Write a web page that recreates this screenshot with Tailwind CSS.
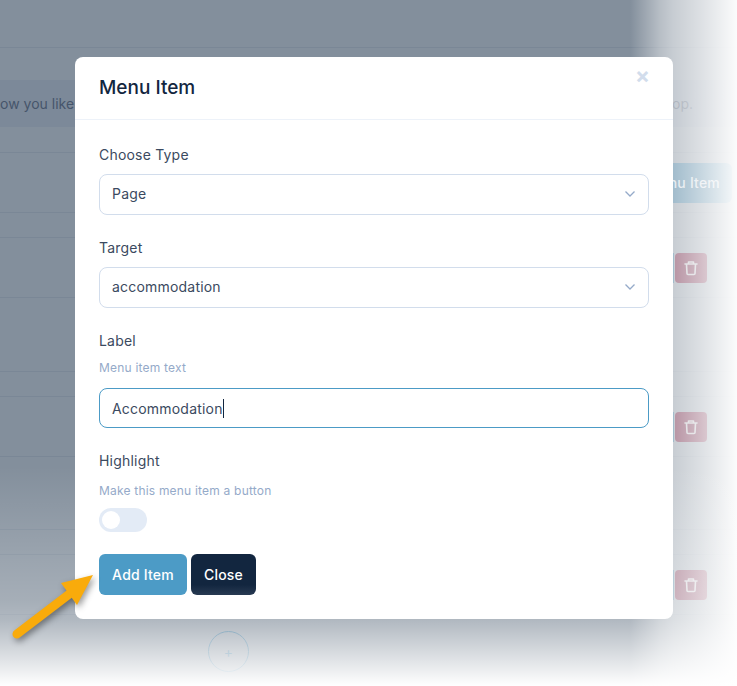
<!DOCTYPE html>
<html lang="en">
<head>
<meta charset="utf-8">
<title>Menu Item</title>
<script src="https://cdn.jsdelivr.net/npm/@tailwindcss/browser@4"></script>
</head>
<body class="m-0 bg-white">
<div class="relative w-[737px] h-[686px] overflow-hidden bg-[#838f9c] font-['Inter','Lato',sans-serif] text-[#12263f]">
  <!-- page behind -->
  <div class="flex flex-col w-full">
    <div class="h-[48px] border-b border-[#7a8796]"></div>
    <div class="h-[32px]"></div>
    <div class="h-[47px] bg-[#7c8999] flex items-center justify-between pr-[44px] text-[14px] text-[#46556b]"><span>ow you like</span><span>op.</span></div>
    <div class="h-[26px] border-b border-[#7a8796]"></div>
    <div class="h-[60px] border-b border-[#7a8796] flex justify-end items-center pr-[5px]"><div class="w-[70px] h-[40px] bg-[#2f6a8e] rounded-[6px] text-[#c8d2dc] text-[14px] font-medium tracking-[0.2px] whitespace-nowrap flex items-center justify-end pr-[12px]">nu Item</div></div>
    <div class="h-[25px] border-b border-[#7a8796]"></div>
    <div class="h-[60px] border-b border-[#7a8796] flex justify-end items-center gap-px pr-[30px]"><div class="w-[10px] h-[30px] bg-[#2f6a8e]"></div><div class="w-[32px] h-[30px] bg-[#5e0f32] rounded-[4px] flex items-center justify-center"><svg width="16" height="16" viewBox="0 0 16 16" fill="none" stroke="#b4b4bc" stroke-width="1.600" stroke-linecap="round" stroke-linejoin="round"><path d="M2 4h12M5.500 4V2h5v2M3.500 4l.5 9.500a1 1 0 0 0 1 1h6a1 1 0 0 0 1-1l.5-9.500"/></svg></div></div>
    <div class="h-[74px] border-b border-[#7a8796]"></div>
    <div class="h-[25px] border-b border-[#7a8796]"></div>
    <div class="h-[60px] border-b border-[#7a8796] flex justify-end items-center gap-px pr-[30px]"><div class="w-[10px] h-[30px] bg-[#2f6a8e]"></div><div class="w-[32px] h-[30px] bg-[#5e0f32] rounded-[4px] flex items-center justify-center"><svg width="16" height="16" viewBox="0 0 16 16" fill="none" stroke="#b4b4bc" stroke-width="1.600" stroke-linecap="round" stroke-linejoin="round"><path d="M2 4h12M5.500 4V2h5v2M3.500 4l.5 9.500a1 1 0 0 0 1 1h6a1 1 0 0 0 1-1l.5-9.500"/></svg></div></div>
    <div class="h-[73px] border-b border-[#7a8796]"></div>
    <div class="h-[25px] border-b border-[#7a8796]"></div>
    <div class="h-[60px] border-b border-[#7a8796] flex justify-end items-center gap-px pr-[30px]"><div class="w-[10px] h-[30px] bg-[#2f6a8e]"></div><div class="w-[32px] h-[30px] bg-[#5e0f32] rounded-[4px] flex items-center justify-center"><svg width="16" height="16" viewBox="0 0 16 16" fill="none" stroke="#b4b4bc" stroke-width="1.600" stroke-linecap="round" stroke-linejoin="round"><path d="M2 4h12M5.500 4V2h5v2M3.500 4l.5 9.500a1 1 0 0 0 1 1h6a1 1 0 0 0 1-1l.5-9.500"/></svg></div></div>
    <div class="pt-[16px] pl-[208px]"><div class="w-[41px] h-[41px] rounded-full border border-[#2f6a8e] flex items-center justify-center text-[#2f6a8e] text-[14px]">+</div></div>
  </div>
  <!-- fades of the cropped screenshot -->
  <div class="absolute inset-0 bg-[linear-gradient(to_right,rgba(255,255,255,0)_85.5%,rgba(255,255,255,0.42)_89.5%,rgba(255,255,255,0.55)_91.3%,rgba(255,255,255,0.72)_95%,rgba(255,255,255,0.97)_100%)]"></div>
  <div class="absolute inset-0 bg-[linear-gradient(to_bottom,rgba(255,255,255,0)_68%,rgba(255,255,255,0.28)_87.5%,rgba(255,255,255,0.37)_90.4%,rgba(255,255,255,0.75)_96.2%,rgba(255,255,255,1)_100%)]"></div>

  <!-- modal -->
  <div class="absolute left-[75px] top-[57px] w-[598px] h-[562px] bg-white rounded-[8px]">
    <div class="relative h-[63px] border-b border-[#edf2f9] flex items-center px-[24px] pb-[2px]">
      <h2 class="text-[19px] leading-none font-medium text-[#12263f]">Menu Item</h2>
      <span class="absolute right-[23px] top-[8px] text-[#d2ddec] text-[22px] leading-[20px] font-bold">×</span>
    </div>
    <div class="px-[24px] pt-[25px] text-[14px] text-[#3b4a60] tracking-[0.2px]">
      <div class="h-[20px] leading-[20px]">Choose Type</div>
      <div class="mt-[9px] h-[41px] border border-[#d2ddec] rounded-[8px] flex items-center justify-between pl-[12px] pr-[12px] pb-[2px]"><span>Page</span><svg width="12" height="8" viewBox="0 0 12 8" fill="none" stroke="#95aac9" stroke-width="1.300"><path d="M1.500 1.500 6 6l4.500-4.500"/></svg></div>
      <div class="mt-[23px] h-[20px] leading-[20px]">Target</div>
      <div class="mt-[9px] h-[41px] border border-[#d2ddec] rounded-[8px] flex items-center justify-between pl-[12px] pr-[12px] pb-[2px]"><span>accommodation</span><svg width="12" height="8" viewBox="0 0 12 8" fill="none" stroke="#95aac9" stroke-width="1.300"><path d="M1.500 1.500 6 6l4.500-4.500"/></svg></div>
      <div class="mt-[23px] h-[20px] leading-[20px]">Label</div>
      <div class="mt-[9px] h-[16px] leading-[16px] text-[12px] text-[#95aac9]">Menu item text</div>
      <div class="mt-[12px] h-[40px] border border-[#4c9bc6] rounded-[8px] flex items-center pl-[12px]"><span>Accommodation</span><span class="w-px h-[19px] bg-[#12263f]"></span></div>
      <div class="mt-[23px] h-[20px] leading-[20px]">Highlight</div>
      <div class="mt-[12px] h-[16px] leading-[16px] text-[12px] text-[#95aac9]">Make this menu item a button</div>
      <div class="mt-[9px] w-[48px] h-[24px] rounded-full bg-[#e3ebf6] p-[3px]"><div class="w-[18px] h-[18px] rounded-full bg-white"></div></div>
      <div class="mt-[22px] flex gap-[4px]">
        <div class="w-[88px] h-[41px] rounded-[6px] bg-[#4c9bc6] text-white text-[14px] font-medium flex items-center justify-center">Add Item</div>
        <div class="w-[65px] h-[41px] rounded-[6px] bg-gradient-to-b from-[#12263f] from-[75%] to-[#283a52] text-white text-[14px] font-medium flex items-center justify-center">Close</div>
      </div>
    </div>
  </div>

  <!-- arrow annotation -->
  <svg class="absolute left-0 top-[560px] drop-shadow-[2px_3px_3px_rgba(0,0,0,0.4)]" width="110" height="90" viewBox="0 560 110 90"><path d="M17 634 72 592" stroke="#f9ab0b" stroke-width="9" stroke-linecap="round"/><path d="M93 575 61 583 77 605Z" fill="#f9ab0b"/></svg>
</div>
</body>
</html>
